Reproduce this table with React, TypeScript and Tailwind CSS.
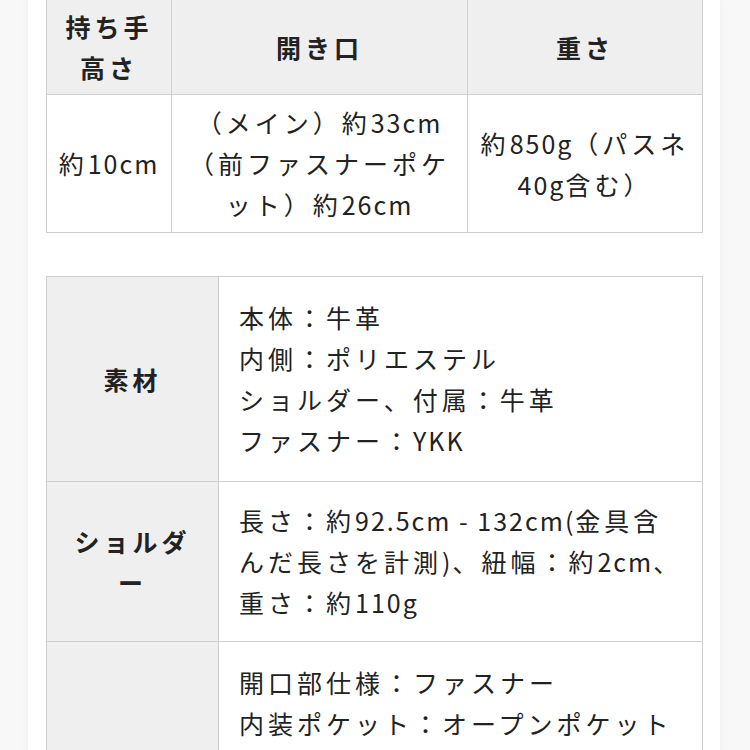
const cell = "border border-[#cfcfcf] align-middle";

// ASCII runs get tighter tracking than the full-width characters around them
function Text({ text }: { text: string }) {
  const parts = text.split(/([\x20-\x7e]+)/);
  return (
    <>
      {parts.map((p, i) =>
        /^[\x20-\x7e]+$/.test(p) ? (
          <span key={i} className="tracking-[2px]">
            {p}
          </span>
        ) : (
          p
        )
      )}
    </>
  );
}

function Lines({ lines }: { lines: string[] }) {
  return (
    <>
      {lines.map((l, i) => (
        <div key={i} className="whitespace-nowrap">
          <Text text={l} />
        </div>
      ))}
    </>
  );
}

const specs = [
  {
    label: ["素材"],
    pad: "py-5",
    lines: ["本体：牛革", "内側：ポリエステル", "ショルダー、付属：牛革", "ファスナー：YKK"],
  },
  {
    label: ["ショルダ", "ー"],
    pad: "py-[18px]",
    lines: ["長さ：約92.5cm - 132cm(金具含", "んだ長さを計測)、紐幅：約2cm、", "重さ：約110g"],
  },
  {
    label: ["仕様"],
    pad: "py-5",
    lines: [
      "開口部仕様：ファスナー",
      "内装ポケット：オープンポケット",
      "×2、ファスナーポケット×1",
      "外装ポケット：ファスナーポ",
      "ケット×1",
      "底鋲：なし",
    ],
  },
];

export default function App() {
  return (
    <div className="min-h-screen bg-[#f8f8f8] font-['Noto_Sans_CJK_JP','Noto_Sans',sans-serif] text-[25px] leading-[41px] tracking-[4px] text-[#222]">
      <div className="ml-[28px] w-[692px] bg-white px-[18px] pb-10 shadow-[0_0_8px_rgba(0,0,0,0.05)]">
        <table className="mt-[-1px] w-[656px] table-fixed border-collapse">
          <colgroup>
            <col className="w-[125px]" />
            <col className="w-[296px]" />
            <col className="w-[235px]" />
          </colgroup>
          <thead>
            <tr className="bg-[#efefef] font-bold">
              <th className={`${cell} px-1 py-[6px] text-center`}>
                <Lines lines={["持ち手", "高さ"]} />
              </th>
              <th className={`${cell} px-1 py-[6px] text-center`}>開き口</th>
              <th className={`${cell} px-1 py-[6px] text-center`}>重さ</th>
            </tr>
          </thead>
          <tbody>
            <tr>
              <td className={`${cell} px-1 py-[7px] text-center`}>
                <Lines lines={["約10cm"]} />
              </td>
              <td className={`${cell} px-1 py-[7px] text-center`}>
                <Lines lines={["（メイン）約33cm", "（前ファスナーポケ", "ット）約26cm"]} />
              </td>
              <td className={`${cell} px-1 py-[7px] text-center`}>
                <Lines lines={["約850g（パスネ", "40g含む）"]} />
              </td>
            </tr>
          </tbody>
        </table>

        <table className="mt-[43px] w-[656px] table-fixed border-collapse">
          <colgroup>
            <col className="w-[172px]" />
            <col className="w-[484px]" />
          </colgroup>
          <tbody>
            {specs.map((s, i) => (
              <tr key={i}>
                <th className={`${cell} bg-[#efefef] px-5 ${s.pad} text-center font-bold`}>
                  <Lines lines={s.label} />
                </th>
                <td className={`${cell} px-5 ${s.pad} text-left`}>
                  <Lines lines={s.lines} />
                </td>
              </tr>
            ))}
          </tbody>
        </table>
      </div>
    </div>
  );
}
